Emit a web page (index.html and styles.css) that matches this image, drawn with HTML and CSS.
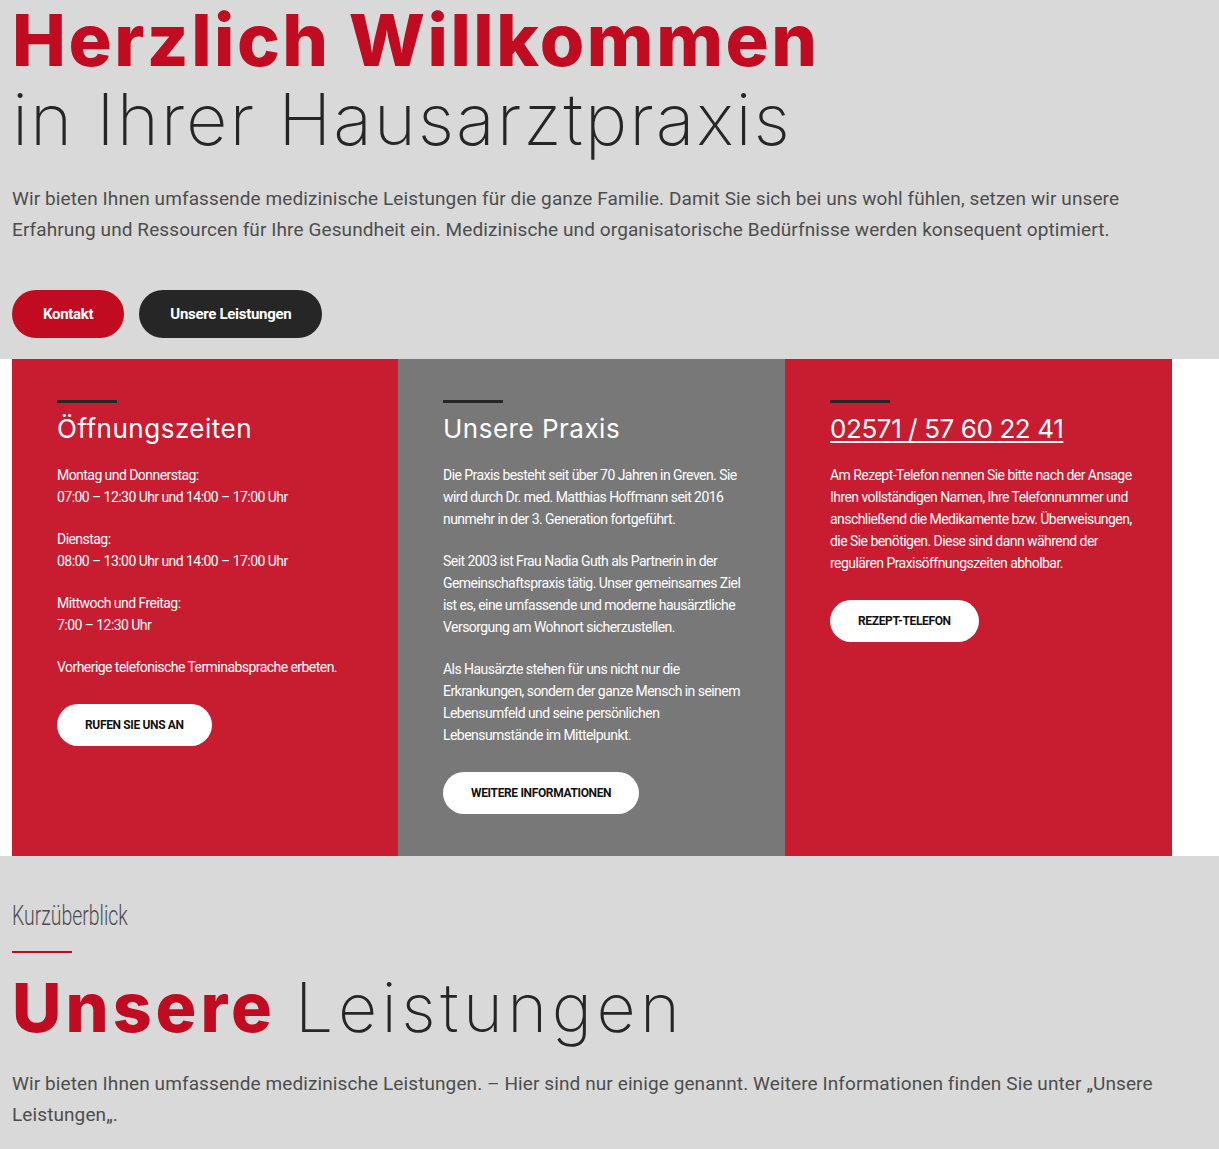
FILE: index.html
```html
<!DOCTYPE html>
<html lang="de">
<head>
<meta charset="utf-8">
<title>Hausarztpraxis</title>
<link rel="stylesheet" href="styles.css">
</head>
<body>
<section class="hero">
  <h1 class="hero-title"><span class="strong">Herzlich Willkommen</span><span class="light">in Ihrer Hausarztpraxis</span></h1>
  <p class="lead">Wir bieten Ihnen umfassende medizinische Leistungen für die ganze Familie. Damit Sie sich bei uns wohl fühlen, setzen wir unsere Erfahrung und Ressourcen für Ihre Gesundheit ein. Medizinische und organisatorische Bedürfnisse werden konsequent optimiert.</p>
  <div class="actions">
    <a class="btn btn-red" href="#">Kontakt</a>
    <a class="btn btn-dark" href="#">Unsere Leistungen</a>
  </div>
</section>

<section class="cards-wrap">
  <div class="cards">
    <div class="card card-red">
      <span class="rule"></span>
      <h3 class="card-title">Öffnungszeiten</h3>
      <p>Montag und Donnerstag:<br>07:00 – 12:30 Uhr und 14:00 – 17:00 Uhr</p>
      <p>Dienstag:<br>08:00 – 13:00 Uhr und 14:00 – 17:00 Uhr</p>
      <p>Mittwoch und Freitag:<br>7:00 – 12:30 Uhr</p>
      <p>Vorherige telefonische Terminabsprache erbeten.</p>
      <a class="btn-white" href="#">RUFEN SIE UNS AN</a>
    </div>
    <div class="card card-gray">
      <span class="rule"></span>
      <h3 class="card-title">Unsere Praxis</h3>
      <p>Die Praxis besteht seit über 70 Jahren in Greven. Sie wird durch Dr. med. Matthias Hoffmann seit 2016 nunmehr in der 3. Generation fortgeführt.</p>
      <p>Seit 2003 ist Frau Nadia Guth als Partnerin in der Gemeinschaftspraxis tätig. Unser gemeinsames Ziel ist es, eine umfassende und moderne hausärztliche Versorgung am Wohnort sicherzustellen.</p>
      <p>Als Hausärzte stehen für uns nicht nur die Erkrankungen, sondern der ganze Mensch in seinem Lebensumfeld und seine persönlichen Lebensumstände im Mittelpunkt.</p>
      <a class="btn-white" href="#">WEITERE INFORMATIONEN</a>
    </div>
    <div class="card card-red">
      <span class="rule"></span>
      <h3 class="card-title"><a class="phone" href="#">02571 / 57 60 22 41</a></h3>
      <p>Am Rezept-Telefon nennen Sie bitte nach der Ansage Ihren vollständigen Namen, Ihre Telefonnummer und anschließend die Medikamente bzw. Überweisungen, die Sie benötigen. Diese sind dann während der regulären Praxisöffnungszeiten abholbar.</p>
      <a class="btn-white" href="#">REZEPT-TELEFON</a>
    </div>
  </div>
</section>

<section class="services">
  <div class="eyebrow">Kurzüberblick</div>
  <span class="rule-red"></span>
  <h2 class="services-title"><span class="strong">Unsere</span> <span class="light">Leistungen</span></h2>
  <p class="lead">Wir bieten Ihnen umfassende medizinische Leistungen. – Hier sind nur einige genannt. Weitere Informationen finden Sie unter „Unsere Leistungen„.</p>
</section>
</body>
</html>
```

FILE: styles.css
```css
html, body {
  margin: 0;
  padding: 0;
}
body {
  background: #d9d9d9;
  font-family: Roboto, "Noto Sans", sans-serif;
  color: #4d4d4d;
}

.hero {
  padding: 6px 12px 21px;
}
.hero-title {
  margin: 0;
  font-family: Inter, "Noto Sans", sans-serif;
  font-size: 72px;
  line-height: 79px;
  font-weight: 400;
}
.hero-title span {
  display: block;
}
.strong {
  color: #c10b20;
  font-weight: 800;
}
.light {
  color: #262626;
  font-weight: 200;
}
.hero-title .strong {
  letter-spacing: 2.5px;
  line-height: 67px;
  margin-bottom: 6px;
}
.hero-title .light {
  letter-spacing: 1.9px;
}

.lead {
  margin: 25px 0 0;
  font-size: 19px;
  line-height: 31px;
  color: #4d4d4d;
  letter-spacing: 0.1px;
}

.actions {
  display: flex;
  gap: 15px;
  margin-top: 45px;
}
.btn {
  display: inline-flex;
  align-items: center;
  justify-content: center;
  height: 48px;
  padding: 0 31px;
  border-radius: 24px;
  color: #fff;
  text-decoration: none;
  font-size: 15px;
  font-weight: 700;
  letter-spacing: -0.3px;
}
.btn-red { background: #c10b20; }
.btn-dark { background: #262626; }

.cards-wrap {
  background: #fff;
  padding-left: 12px;
}
.cards {
  display: grid;
  grid-template-columns: 386px 387px 387px;
  width: 1160px;
}
.card {
  padding: 41px 37px 42px 45px;
  color: #fff;
  font-size: 14px;
  line-height: 22px;
  letter-spacing: -0.55px;
}
.card-red { background: #c81d31; }
.card-gray { background: #787878; }
.rule {
  display: block;
  width: 60px;
  height: 3px;
  background: #262626;
  margin-bottom: 10px;
}
.card-title {
  margin: 0 0 20px;
  font-family: Inter, "Noto Sans", sans-serif;
  font-weight: 400;
  font-size: 26px;
  line-height: 31px;
  letter-spacing: 0.5px;
}
.phone {
  color: #fff;
  text-decoration: underline;
  text-decoration-thickness: 2px;
  text-underline-offset: 3px;
  letter-spacing: -0.4px;
}
.card p {
  margin: 0 0 20px;
}
.card p:last-of-type {
  margin-bottom: 26px;
}
.btn-white {
  display: inline-flex;
  align-items: center;
  height: 42px;
  padding: 0 28px;
  border-radius: 21px;
  background: #fff;
  color: #111;
  text-decoration: none;
  font-size: 12px;
  font-weight: 700;
  letter-spacing: -0.35px;
}

.services {
  padding: 44px 12px 20px;
}
.eyebrow {
  display: inline-block;
  font-family: Roboto, sans-serif;
  font-weight: 300;
  font-size: 27px;
  line-height: 32px;
  color: #4d4d4d;
  transform: scaleX(0.72);
  transform-origin: left center;
}
.rule-red {
  display: block;
  width: 60px;
  height: 2px;
  background: #c10b20;
  margin: 19px 0 14px;
}
.services-title {
  margin: 0;
  font-family: Inter, "Noto Sans", sans-serif;
  font-size: 68px;
  line-height: 80px;
  font-weight: 400;
}
.services-title .strong {
  letter-spacing: 4px;
}
.services-title .light {
  letter-spacing: 4.5px;
}
.services .lead {
  margin-top: 21px;
}
```
